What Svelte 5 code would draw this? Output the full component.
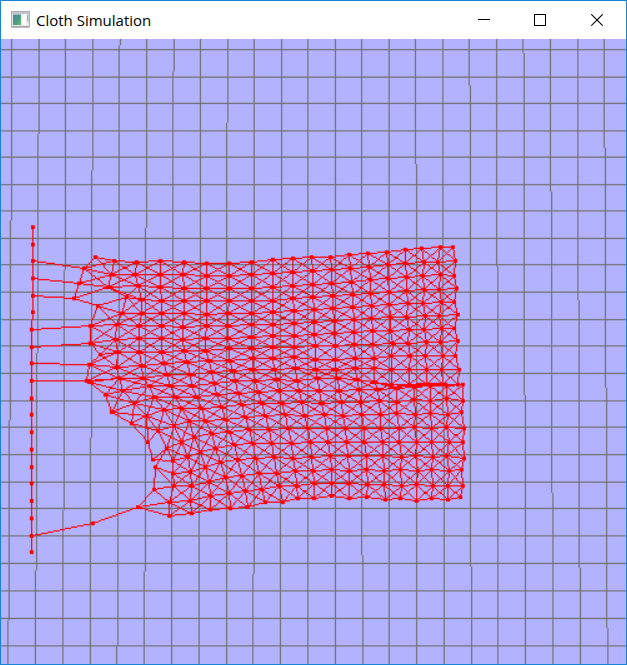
<script>
  import { onMount } from 'svelte';

  const SCALE = 1.25;
  const SIZE = 500;
  let canvas;

  // Particle positions per column, in thirds of a pixel relative to each block origin.
  const blocks = [
    { ox: 20, oy: 215, oy2: 380, ox2: 20, cols: [
      [[226,125],[193,160],[177,205],[164,250],[234,272],[211,332],[212,385],[241,418],[206,448],[201,497],
       [208,6],[256,43],[275,97],[334,130],[383,186],[398,238],[406,261],[402,328],[353,380],[217,430]]
    ] },
    { ox: 20, oy: 215, oy2: 370, ox2: 150, cols: [
      [[282,137],[274,178],[265,218],[319,248],[304,295],[290,328],[286,374],[294,413],[289,457],[296,489],
       [-80,61],[-48,100],[-10,137],[24,183],[50,234],[67,272],[67,310],[72,348],[59,396],[57,437]],
      [[349,142],[346,178],[352,212],[365,253],[365,295],[358,332],[356,370],[358,411],[365,453],[370,489],
       [-2,46],[13,81],[43,118],[72,167],[94,215],[113,260],[121,306],[125,348],[121,392],[124,430]]
    ] },
    { ox: 150, oy: 240, oy2: 370, ox2: 150, cols: [
      [[31,62],[31,103],[31,142],[36,182],[36,220],[36,257],[34,295],[36,336],[43,370],[51,404],
       [62,46],[76,81],[96,115],[118,153],[134,201],[152,248],[165,292],[177,336],[181,378],[181,418]],
      [[102,66],[99,103],[102,146],[102,182],[102,220],[99,261],[98,298],[102,332],[109,366],[122,402],
       [124,46],[140,81],[154,115],[167,153],[184,190],[197,235],[212,277],[225,322],[238,370],[241,414]],
      [[169,70],[169,107],[169,146],[169,182],[169,223],[169,257],[167,295],[167,332],[176,362],[183,398],
       [193,40],[201,73],[213,111],[225,148],[238,186],[251,224],[264,268],[276,317],[286,362],[293,411]],
      [[238,70],[238,107],[238,146],[238,182],[234,220],[234,257],[232,295],[238,325],[238,362],[249,394],
       [255,31],[264,70],[275,103],[286,142],[298,178],[308,220],[317,265],[327,310],[336,359],[347,396]],
      [[305,66],[305,103],[305,146],[305,182],[305,220],[303,254],[303,291],[303,325],[309,355],[310,388],
       [316,31],[322,66],[333,100],[345,137],[356,178],[365,220],[372,261],[380,310],[389,348],[398,396]],
      [[368,58],[368,100],[368,142],[368,182],[368,216],[368,254],[368,287],[368,321],[370,355],[373,388],
       [380,29],[387,62],[395,100],[405,133],[413,175],[423,220],[430,265],[436,302],[440,348],[444,385]],
      [[429,54],[429,97],[429,137],[429,175],[432,212],[432,250],[432,287],[434,321],[434,351],[437,385],
       [441,31],[449,62],[455,96],[464,137],[472,175],[480,216],[485,261],[489,302],[492,340],[492,385]]
    ] },
    { ox: 300, oy: 235, oy2: 370, ox2: 300, cols: [
      [[35,66],[38,107],[38,148],[39,186],[42,223],[42,261],[43,298],[46,332],[46,374],[46,403],
       [54,25],[58,62],[66,100],[72,133],[80,175],[84,216],[91,257],[93,298],[95,340],[95,377]],
      [[91,66],[94,103],[94,146],[98,182],[100,220],[102,257],[102,295],[105,332],[106,374],[106,403],
       [115,25],[119,62],[125,97],[130,137],[135,175],[140,216],[143,257],[147,302],[148,340],[148,385]],
      [[147,58],[151,100],[153,142],[157,178],[158,216],[162,254],[162,291],[164,328],[166,370],[166,400],
       [169,29],[177,59],[181,97],[184,133],[192,175],[194,216],[200,257],[198,298],[204,343],[201,381]],
      [[204,54],[207,97],[212,133],[211,175],[216,212],[216,250],[219,287],[219,328],[222,370],[222,400],
       [223,37],[232,59],[236,93],[241,133],[241,175],[249,216],[250,257],[254,302],[253,343],[255,389]],
      [[260,51],[264,88],[264,130],[269,171],[267,208],[272,246],[271,287],[278,325],[274,362],[276,403],
       [275,42],[290,55],[291,97],[290,130],[297,175],[296,216],[304,261],[301,298],[304,347],[301,385]],
      [[316,43],[316,85],[320,126],[318,167],[323,205],[321,246],[327,283],[324,325],[331,362],[327,403],
       [328,43],[343,50],[341,88],[346,133],[342,171],[349,216],[347,257],[353,302],[349,343],[349,391]],
      [[365,40],[372,81],[368,122],[372,164],[369,205],[376,242],[372,283],[380,321],[376,362],[380,403],
       [380,45],[392,48],[391,93],[391,130],[395,175],[393,216],[399,261],[395,298],[400,347],[395,385]],
      [[422,36],[413,81],[422,118],[417,164],[425,201],[418,242],[425,280],[422,321],[430,362],[425,403],
       [430,42],[438,46],[438,85],[444,133],[438,171],[446,216],[440,257],[448,302],[444,347],[444,389]],
      [[459,36],[467,77],[462,122],[470,160],[462,201],[474,238],[462,280],[474,317],[467,362],[477,403],
       [474,44],[489,43],[489,93],[484,126],[493,175],[489,216],[492,265],[484,298],[489,347],[481,381]]
    ] }
  ];

  const pinY = [227,244.5,261,278,295.5,312,329.5,347,363,381,398,414.5,432,449.5,467,483,500.5,518,535.5,552];
  const pinned = pinY.map((y, i) => [i < 6 ? 32.7 : 31.6, y]);

  const columns = [pinned];
  for (const b of blocks) {
    for (const col of b.cols) {
      columns.push(col.map(([x, y], r) => r < 10
        ? [b.ox + x / 3, b.oy + y / 3]
        : [b.ox2 + x / 3, b.oy2 + y / 3]));
    }
  }

  // Springs that survived the tear: [pinned row, first column row]
  const pinSprings = [[2,1],[3,2],[4,3],[6,5],[7,6],[8,8],[9,9],[18,19]];
  // First column row -> second column rows
  const tornSprings = [[0,1],[0,1,2],[1,2],[2],[3,4,5],[4,5,6],[5,6,7],[6,7,8],[7,8,9],[8,9],
    [9,10],[9,10,11],[10,11,12],[11,12,13],[12,13],[14,15],[14,16,17],[17,18],[18,19],[]];
  // Springs bunched together where the cloth folds over itself
  const fold = [
    [[385, 384], [446, 383.5]],
    [[411, 386], [446, 386]],
    [[423, 385], [446, 385]]
  ];

  const gridY = [49.5,77,103.5,131,157,184.5,211,238.5,265,292,319.5,346,373.5,401,427,454.5,482,508.5,536,563.5,590.5,618.5,646];

  const cell = ([x, y]) => [Math.floor((x - 1) / SCALE), Math.floor((y - 39) / SCALE)];

  function line(ctx, a, b) {
    let [x0, y0] = cell(a);
    const [x1, y1] = cell(b);
    const dx = Math.abs(x1 - x0), dy = -Math.abs(y1 - y0);
    const sx = x0 < x1 ? 1 : -1, sy = y0 < y1 ? 1 : -1;
    let err = dx + dy;
    for (;;) {
      ctx.fillRect(x0, y0, 1, 1);
      if (x0 === x1 && y0 === y1) break;
      const e2 = 2 * err;
      if (e2 >= dy) { err += dy; x0 += sx; }
      if (e2 <= dx) { err += dx; y0 += sy; }
    }
  }

  onMount(() => {
    const ctx = canvas.getContext('2d');
    ctx.fillStyle = '#b2b2ff';
    ctx.fillRect(0, 0, SIZE, SIZE);

    ctx.fillStyle = '#727272';
    for (const y of gridY) ctx.fillRect(0, cell([0, y])[1], SIZE, 1);
    for (let k = -12; k <= 10; k++) {
      for (let j = 0; j < SIZE; j++) {
        const x = 335.07 + k * (26.912 + 0.00052 * j * SCALE);
        ctx.fillRect(cell([x, 0])[0], j, 1, 1);
      }
    }

    ctx.fillStyle = '#ff0000';
    columns.forEach((col, c) => {
      for (let r = 0; r < 20; r++) {
        if (r < 19 && !(c === 1 && r === 15)) line(ctx, col[r], col[r + 1]);
        if (c > 1 && c < 19) {
          const next = columns[c + 1];
          line(ctx, col[r], next[r]);
          if (r < 19) {
            line(ctx, col[r], next[r + 1]);
            line(ctx, col[r + 1], next[r]);
          }
        }
      }
    });
    for (const [p, q] of pinSprings) line(ctx, columns[0][p], columns[1][q]);
    tornSprings.forEach((rows, r) => rows.forEach((q) => line(ctx, columns[1][r], columns[2][q])));
    for (const [a, b] of fold) line(ctx, a, b);

    for (const col of columns) {
      for (const p of col) {
        const [x, y] = cell(p);
        ctx.fillRect(x - 1, y - 1, 3, 3);
      }
    }
  });
</script>

<div class="window">
  <header class="titlebar">
    <svg class="app-icon" width="19" height="17" viewBox="0 0 19 17">
      <defs>
        <linearGradient id="pane" x1="0" y1="0" x2="1" y2="1">
          <stop offset="0" stop-color="#4f86a8" />
          <stop offset="0.5" stop-color="#4a9a86" />
          <stop offset="1" stop-color="#68b878" />
        </linearGradient>
      </defs>
      <rect x="0.5" y="0.5" width="18" height="15.5" fill="#e8e8e8" stroke="#b0b0b4" />
      <rect x="1" y="1" width="17" height="2" fill="#c3c6cc" />
      <rect x="2" y="3.5" width="8" height="10.5" fill="url(#pane)" />
      <rect x="11" y="3.5" width="4.5" height="10.5" fill="#fafafa" />
      <rect x="16" y="3.5" width="1.5" height="7" fill="#8fb8b0" />
      <rect x="1" y="15" width="17" height="1.5" fill="#a5a5a8" />
    </svg>
    <span class="title">Cloth Simulation</span>
    <div class="controls">
      <svg width="13" height="13" viewBox="0 0 13 13"><rect x="0" y="5" width="12" height="1" /></svg>
      <svg width="13" height="13" viewBox="0 0 13 13"><rect class="box" x="0.5" y="0.5" width="11" height="11" /></svg>
      <svg width="13" height="13" viewBox="0 0 13 13"><path d="M0.3 0.3L11.7 11.7M11.7 0.3L0.3 11.7" /></svg>
    </div>
  </header>
  <canvas bind:this={canvas} width={SIZE} height={SIZE}></canvas>
</div>

<style>
  :global(body) { margin: 0; overflow: hidden; }
  .window {
    box-sizing: border-box;
    width: 627px;
    height: 665px;
    border: 1px solid #1883d7;
    background: #fff;
    display: flex;
    flex-direction: column;
  }
  .titlebar {
    height: 38px;
    flex: none;
    display: flex;
    align-items: center;
    padding-left: 10px;
    box-sizing: border-box;
  }
  .app-icon { flex: none; margin-right: 6px; margin-top: -2px; }
  .title {
    font: 15px/20px "Open Sans", "Noto Sans", sans-serif;
    color: #000;
    white-space: nowrap;
    margin-top: -1px;
  }
  .controls { margin-left: auto; display: flex; padding-right: 22px; }
  .controls svg { display: block; stroke: none; fill: #000; margin-left: 44px; }
  .controls svg:first-child { margin-left: 0; }
  .controls svg:nth-child(2) { margin-left: 43px; }
  .controls .box { fill: none; stroke: #000; }
  .controls path { fill: none; stroke: #000; stroke-width: 1.1; }
  canvas { display: block; width: 625px; height: 625px; flex: none; }
</style>
